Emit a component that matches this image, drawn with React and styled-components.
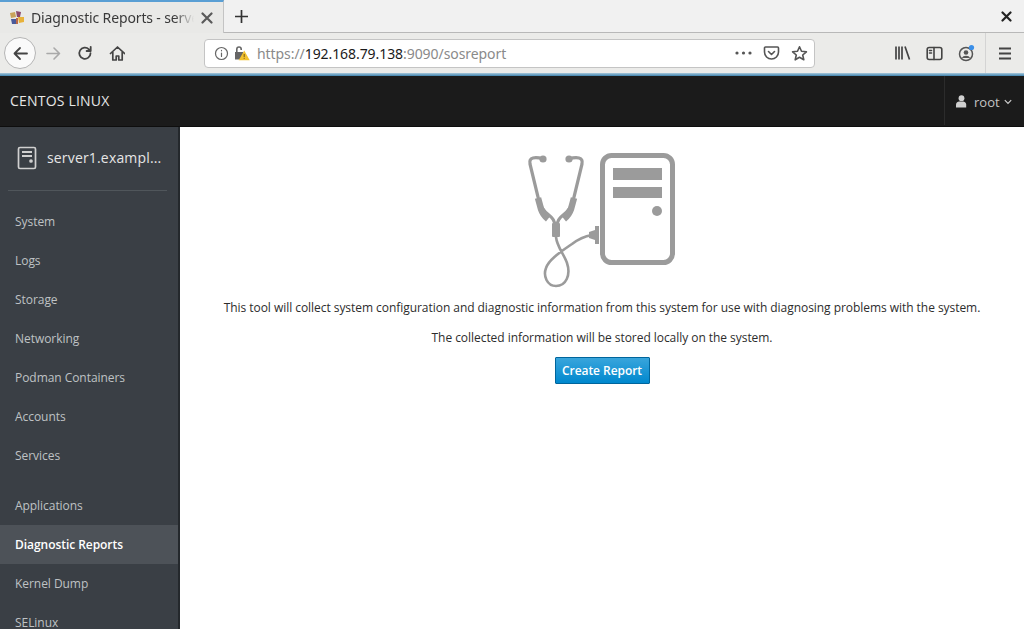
import React from "react";
import styled, { createGlobalStyle } from "styled-components";

const Global = createGlobalStyle`
  html, body { margin: 0; padding: 0; height: 100%; overflow: hidden; background: #fff; }
  #root { height: 100%; }
`;
const Page = styled.div`
  width: 1024px; height: 629px; display: flex; flex-direction: column; overflow: hidden;
  font-family: "Open Sans", sans-serif;
`;
const TabBar = styled.div`
  height: 33px; flex: none; display: flex; background: #f0f0f0; box-sizing: border-box;
`;
const Tab = styled.div`
  width: 224px; flex: none; box-sizing: border-box; height: 33px; display: flex; align-items: center;
  padding: 0 8px 0 9px; background: #e9e9e7; border-top: 2px solid #5a9fd4; border-right: 1px solid #c4c4c4;
`;
const Favicon = styled.svg`width: 16px; height: 16px; flex: none; margin-right: 6px;`;
const TabTitle = styled.div`
  font: 14px "Noto Sans", sans-serif; color: #3a3a3a; width: 163px; white-space: nowrap; overflow: hidden;
  margin-right: 7px; letter-spacing: -0.01em;
  -webkit-mask-image: linear-gradient(90deg, #000 88%, transparent);
  mask-image: linear-gradient(90deg, #000 88%, transparent);
`;
const TabRest = styled.div`
  flex: 1; display: flex; align-items: center; justify-content: space-between; padding: 0 12px 0 10px;
  border-bottom: 1px solid #b8b8b8; background: #f1f1f1;
`;
const Toolbar = styled.div`
  height: 40px; flex: none; display: flex; align-items: center; background: #ebebe9; position: relative;
`;
const BackCircle = styled.div`
  width: 32px; height: 32px; margin-left: 4px; flex: none; border-radius: 50%; border: 1px solid #b5b5b5; background: #fafafa;
  display: flex; align-items: center; justify-content: center; box-sizing: border-box;
`;
const NavIcons = styled.div`
  display: flex; align-items: center; gap: 15px; margin-left: 9px; width: 159px; flex: none;
`;
const UrlBar = styled.div`
  width: 611px; height: 29px; box-sizing: border-box; flex: none; display: flex; align-items: center; background: #fff;
  border: 1px solid #c4c4c4; border-radius: 4px; padding: 0 6px 0 9px;
`;
const Url = styled.div`
  font: 14px "Noto Sans", sans-serif; color: #8a8a8a; margin-left: 7px; flex: 1; white-space: nowrap; letter-spacing: -0.07px;
  b { font-weight: 400; color: #1a1a1a; }
`;
const UrlIcons = styled.div`display: flex; align-items: center; gap: 11px;`;
const RightIcons = styled.div`
  flex: 1; display: flex; align-items: center; justify-content: flex-end; height: 100%;
`;
const LibIcons = styled.div`display: flex; align-items: center; gap: 15px; margin-right: 9px;`;
const Burger = styled.div`
  height: 100%; width: 39px; box-sizing: border-box; border-left: 1px solid #d4d4d4; display: flex; align-items: center; justify-content: center;
`;
const Accent = styled.div`height: 3px; flex: none; background: linear-gradient(#a8c8dc, #3f83ad);`;
const Navbar = styled.div`
  height: 51px; flex: none; background: #1b1b1b; display: flex; align-items: center; justify-content: space-between; box-sizing: border-box;
  border-bottom: 1px solid #0e0e0e; padding-bottom: 1px;
`;
const Brand = styled.div`color: #e6e6e6; font-size: 14px; margin-left: 10px; letter-spacing: 0.2px;`;
const UserMenu = styled.div`
  width: 80px; height: 100%; box-sizing: border-box; border-left: 1px solid #2c2c2c; display: flex; align-items: center;
  padding-left: 11px; padding-top: 2px; gap: 7px; color: #c4c4c4; font-size: 13px;
`;
const Body = styled.div`flex: 1; display: flex; min-height: 0;`;
const Sidebar = styled.nav`
  width: 180px; flex: none; background: #3a3f45; box-sizing: border-box; border-right: 2px solid #24282c; overflow: hidden;
`;
const HostRow = styled.div`
  height: 64px; margin: 0 11px 0 8px; box-sizing: border-box; display: flex; align-items: center; padding-left: 9px; padding-bottom: 2px;
  border-bottom: 1px solid #50565b; color: #e6e6e6; font-size: 14px; gap: 10px; letter-spacing: 0.012em;
`;
const NavList = styled.div`padding-top: 11px;`;
const NavItem = styled.div`
  height: 39px; display: flex; align-items: center; padding-left: 15px; font-size: 12px; letter-spacing: -0.05px;
  color: ${p => (p.$active ? "#ffffff" : "#bfc2c4")};
  font-weight: ${p => (p.$active ? 600 : 400)};
  background: ${p => (p.$active ? "#4d5258" : "transparent")};
  margin-top: ${p => (p.$gap ? "11px" : 0)};
`;
const Main = styled.main`
  flex: 1; display: flex; flex-direction: column; align-items: center; padding-top: 24px; box-sizing: border-box; background: #fff;
`;
const Illustration = styled.svg`width: 160px; height: 140px; flex: none; margin-left: 4px;`;
const Para = styled.p`
  margin: ${p => p.$mt}px 0 0; font-size: 12px; line-height: 16px; color: #2d2d2d; white-space: nowrap; letter-spacing: -0.047px;
`;
const CreateBtn = styled.button`
  margin-top: 11px; height: 27px; width: 95px; padding: 0; box-sizing: border-box; border: 1px solid #00659c;
  background: linear-gradient(#39a5dc, #0088ce); color: #fff; font: 600 12px "Open Sans", sans-serif; border-radius: 1px; letter-spacing: -0.05px;
`;

const Ic = ({ c = "#4a4a4a", w = 18, h = 18, children, vb = "0 0 18 18", sw = 1.8 }) => (
  <svg width={w} height={h} viewBox={vb} fill="none" stroke={c} strokeWidth={sw} strokeLinecap="round" strokeLinejoin="round">{children}</svg>
);
const nav1 = ["System", "Logs", "Storage", "Networking", "Podman Containers", "Accounts", "Services"];

export default function App() {
  return (
    <Page>
      <Global />
      <TabBar>
        <Tab>
          <Favicon viewBox="0 0 16 16">
            <path d="M1 3l5-1 1 5-5 1z" fill="#c9a35a" />
            <path d="M7 1l5 1-1 5-3 0z" fill="#8a4a6a" />
            <path d="M9 7h6v5l-5 1z" fill="#e8b23a" />
            <path d="M2 9h5v5H3z" fill="#4a5a9a" />
            <path d="M7 8h2v6H7z" fill="#b86a4a" />
          </Favicon>
          <TabTitle>Diagnostic Reports - server1.example.com</TabTitle>
          <Ic w={12} h={12} vb="0 0 12 12" c="#5a5a5a" sw={2.2}><path d="M1.5 1.5l9 9M10.5 1.5l-9 9" /></Ic>
        </Tab>
        <TabRest>
          <Ic w={15} h={15} vb="0 0 15 15" c="#333" sw={1.7}><path d="M7.5 1v13M1 7.5h13" strokeLinecap="butt" /></Ic>
          <Ic w={11} h={11} vb="0 0 11 11" c="#222" sw={2.2}><path d="M1.5 1.5l8 8M9.5 1.5l-8 8" /></Ic>
        </TabRest>
      </TabBar>
      <Toolbar>
        <BackCircle>
          <Ic w={17} h={17} vb="0 0 17 17" c="#444"><path d="M15 8.5H2.5M8 3L2.5 8.5 8 14" /></Ic>
        </BackCircle>
        <NavIcons>
          <Ic w={17} h={17} vb="0 0 17 17" c="#a9a9a9" sw={1.6}><path d="M2 8.5h12.5M9 3l5.5 5.5L9 14" /></Ic>
          <Ic w={16} h={16} vb="0 0 16 16" c="#444"><path d="M13.5 8.2a5.6 5.6 0 1 1-1.6-3.9L13.5 6M13.7 1.8V6H9.6" /></Ic>
          <Ic w={17} h={17} vb="-1 0 17 17" c="#444" sw={1.7}><path d="M1.5 8.5L8.5 2l7 6.5M3.8 7v8h3.4v-4h2.6v4h3.4V7" /></Ic>
        </NavIcons>
        <UrlBar>
          <Ic w={15} h={15} vb="0 0 15 15" c="#666" sw={1.2}><circle cx="7.5" cy="7.5" r="6" /><path d="M7.5 7v3.5M7.5 4.4v.4" /></Ic>
          <span style={{ width: 5 }} />
          <svg width="16" height="16" viewBox="0 0 16 16">
            <path d="M1 7h8v7.5H1z" fill="#666" />
            <path d="M2.8 7V4.2a2.2 2.2 0 0 1 4.4 0V5" fill="none" stroke="#666" strokeWidth="1.6" />
            <path d="M10.2 5.5l5.5 9.8H4.7z" fill="#f2c230" />
            <path d="M10.2 9v3.2M10.2 13.2v.8" stroke="#7a5a10" strokeWidth="1" />
          </svg>
          <Url>https://<b>192.168.79.138</b>:9090/sosreport</Url>
          <UrlIcons>
            <svg width="17" height="4" viewBox="0 0 17 4" fill="#555"><circle cx="2" cy="2" r="1.6" /><circle cx="8.5" cy="2" r="1.6" /><circle cx="15" cy="2" r="1.6" /></svg>
            <Ic w={17} h={16} vb="0 0 17 16" c="#555" sw={1.6}><path d="M2.5 2h12a1 1 0 0 1 1 1v4a7 7 0 0 1-14 0V3a1 1 0 0 1 1-1zM5.5 6.5l3 3 3-3" /></Ic>
            <Ic w={17} h={17} vb="0 0 17 17" c="#555" sw={1.6}><path d="M8.5 1.8l2 4.5 4.9.5-3.7 3.2 1.1 4.8-4.3-2.5-4.3 2.5 1.1-4.8L1.6 6.8l4.9-.5z" /></Ic>
          </UrlIcons>
        </UrlBar>
        <RightIcons>
          <LibIcons>
            <Ic w={17} h={16} vb="0 0 17 16" c="#444" sw={1.7}><path d="M2 1.5v13M5 1.5v13M8 1.5v13M11 1.5l4.5 13" strokeLinecap="butt" /></Ic>
            <Ic w={17} h={15} vb="0 0 17 15" c="#444" sw={1.6}><rect x="1.2" y="1.5" width="14.6" height="12" rx="2" /><path d="M8 1.5v12M3.5 4.5h2M3.5 7h2" /></Ic>
            <svg width="18" height="18" viewBox="0 0 18 18">
              <circle cx="8" cy="10" r="6.5" fill="none" stroke="#555" strokeWidth="1.5" />
              <circle cx="8" cy="8.5" r="2.3" fill="#555" />
              <path d="M3.8 14a4.5 3.6 0 0 1 8.4 0z" fill="#555" />
              <circle cx="13.5" cy="3.5" r="2.6" fill="#3a8fe8" />
            </svg>
          </LibIcons>
          <Burger>
            <Ic w={14} h={13} vb="0 0 14 13" c="#444" sw={1.8}><path d="M1 1.5h12M1 6.5h12M1 11.5h12" strokeLinecap="butt" /></Ic>
          </Burger>
        </RightIcons>
      </Toolbar>
      <Accent />
      <Navbar>
        <Brand>CENTOS LINUX</Brand>
        <UserMenu>
          <svg width="11" height="13" viewBox="0 0 11 13" fill="#d0d0d0"><circle cx="5.5" cy="3.2" r="2.9" /><path d="M0 12.5V9.5c0-1.8 2-3 3-3h4.2c1 0 3 1.2 3 3v3z" /></svg>
          <span>root</span>
          <svg width="8" height="6" viewBox="0 0 8 6" fill="none" stroke="#cfcfcf" strokeWidth="1.2" style={{ marginLeft: -3 }}><path d="M.8 1.2L4 4.4l3.2-3.2" /></svg>
        </UserMenu>
      </Navbar>
      <Body>
        <Sidebar>
          <HostRow>
            <svg width="20" height="24" viewBox="0 0 20 24" fill="none" stroke="#d0d0d0" strokeWidth="1.7">
              <rect x="1.5" y="1.5" width="17" height="21" rx="1.5" />
              <path d="M5 6h10M5 10h10" strokeWidth="2" />
              <circle cx="14" cy="15" r="1" fill="#d0d0d0" />
            </svg>
            <span>server1.exampl...</span>
          </HostRow>
          <NavList>
            {nav1.map(n => <NavItem key={n}>{n}</NavItem>)}
            <NavItem $gap>Applications</NavItem>
            <NavItem $active>Diagnostic Reports</NavItem>
            <NavItem>Kernel Dump</NavItem>
            <NavItem>SELinux</NavItem>
          </NavList>
        </Sidebar>
        <Main>
          <Illustration viewBox="0 0 160 140">
            <g fill="none" stroke="#9b9b9b" strokeLinecap="round" strokeLinejoin="round">
              <path d="M19 8Q13 6 9 7Q5 8 6 13L14 46Q16 58 26 65Q30 68 31 74" strokeWidth="3.2" />
              <path d="M45 8Q51 6 55 7Q59 8 58 13L50 46Q48 58 38 65Q34 68 33 74" strokeWidth="3.2" />
              <path d="M14 47L17 58Q19 64 24 68" strokeWidth="6.5" strokeLinecap="butt" />
              <path d="M50 47L47 58Q45 64 40 68" strokeWidth="6.5" strokeLinecap="butt" />
              <path d="M32 86C33 96 40 103 43 112C47 124 42 135 32 135C23 135 19 125 22 117C25 108 38 100 48 93Q57 86 68 84" strokeWidth="2.6" />
              <rect x="78.5" y="4.5" width="70" height="107" rx="9" strokeWidth="5" />
            </g>
            <g fill="#9b9b9b">
              <circle cx="19" cy="8" r="3.6" />
              <circle cx="45" cy="8" r="3.6" />
              <rect x="28" y="72" width="8" height="14" rx="1" />
              <path d="M65 81l6-2v-4h4v18h-4v-4l-6-2z" />
              <rect x="89" y="17" width="49" height="12" />
              <rect x="89" y="36" width="49" height="11" />
              <circle cx="133" cy="60" r="5" />
            </g>
          </Illustration>
          <Para $mt={9}>This tool will collect system configuration and diagnostic information from this system for use with diagnosing problems with the system.</Para>
          <Para $mt={14}>The collected information will be stored locally on the system.</Para>
          <CreateBtn>Create Report</CreateBtn>
        </Main>
      </Body>
    </Page>
  );
}
